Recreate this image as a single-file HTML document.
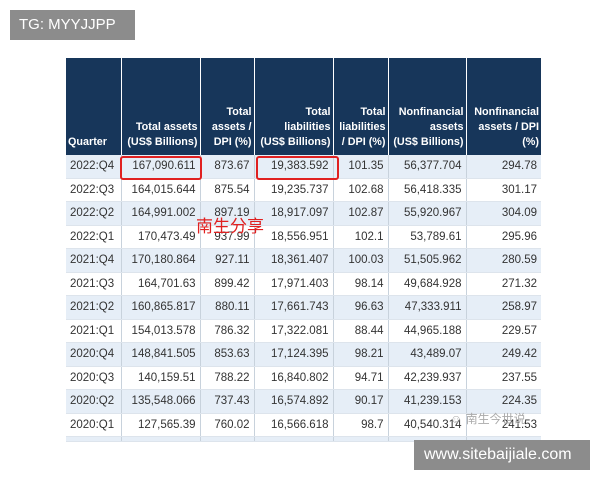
<!DOCTYPE html>
<html><head><meta charset="utf-8"><style>
body{margin:0;width:600px;height:480px;background:#fff;position:relative;overflow:hidden;font-family:"Liberation Sans",Arial,sans-serif;}
table{position:absolute;left:66px;top:58px;border-collapse:collapse;font-size:11.5px;color:#333;table-layout:fixed;width:475px}
th{background:#17365a;color:#fff;font-weight:bold;text-align:right;vertical-align:bottom;padding:0 2px 5px 2px;height:92px;border-left:1px solid #fff;line-height:15px;font-size:10.8px;white-space:nowrap}
th:first-child{text-align:left;border-left:none}
td{height:22.5px;padding:0 4px;text-align:right;border-left:1px solid #c8d2dc;border-bottom:1px solid #dde4ec;}
td:first-child{text-align:left;border-left:none}
tr:nth-child(odd) td{background:#e6eef7}
tr.p td{height:4px}
.badge{position:absolute;background:#8c8c8c;color:#fff;}
.red{position:absolute;border:2px solid #e02020;border-radius:3px}
</style></head><body>
<div class="badge" style="left:10px;top:10px;width:125px;height:30px;font-size:15px;line-height:30px;text-indent:9px">TG: MYYJJPP</div>
<table>
<colgroup><col style="width:55px"><col style="width:79px"><col style="width:54px"><col style="width:79px"><col style="width:55px"><col style="width:78px"><col style="width:75px"></colgroup>
<thead><tr><th>Quarter</th><th>Total assets<br>(US$ Billions)</th><th>Total<br>assets /<br>DPI (%)</th><th>Total<br>liabilities<br>(US$ Billions)</th><th>Total<br>liabilities<br>/ DPI (%)</th><th>Nonfinancial<br>assets<br>(US$ Billions)</th><th>Nonfinancial<br>assets / DPI<br>(%)</th></tr></thead>
<tbody>
<tr><td>2022:Q4</td><td>167,090.611</td><td>873.67</td><td>19,383.592</td><td>101.35</td><td>56,377.704</td><td>294.78</td></tr>
<tr><td>2022:Q3</td><td>164,015.644</td><td>875.54</td><td>19,235.737</td><td>102.68</td><td>56,418.335</td><td>301.17</td></tr>
<tr><td>2022:Q2</td><td>164,991.002</td><td>897.19</td><td>18,917.097</td><td>102.87</td><td>55,920.967</td><td>304.09</td></tr>
<tr><td>2022:Q1</td><td>170,473.49</td><td>937.99</td><td>18,556.951</td><td>102.1</td><td>53,789.61</td><td>295.96</td></tr>
<tr><td>2021:Q4</td><td>170,180.864</td><td>927.11</td><td>18,361.407</td><td>100.03</td><td>51,505.962</td><td>280.59</td></tr>
<tr><td>2021:Q3</td><td>164,701.63</td><td>899.42</td><td>17,971.403</td><td>98.14</td><td>49,684.928</td><td>271.32</td></tr>
<tr><td>2021:Q2</td><td>160,865.817</td><td>880.11</td><td>17,661.743</td><td>96.63</td><td>47,333.911</td><td>258.97</td></tr>
<tr><td>2021:Q1</td><td>154,013.578</td><td>786.32</td><td>17,322.081</td><td>88.44</td><td>44,965.188</td><td>229.57</td></tr>
<tr><td>2020:Q4</td><td>148,841.505</td><td>853.63</td><td>17,124.395</td><td>98.21</td><td>43,489.07</td><td>249.42</td></tr>
<tr><td>2020:Q3</td><td>140,159.51</td><td>788.22</td><td>16,840.802</td><td>94.71</td><td>42,239.937</td><td>237.55</td></tr>
<tr><td>2020:Q2</td><td>135,548.066</td><td>737.43</td><td>16,574.892</td><td>90.17</td><td>41,239.153</td><td>224.35</td></tr>
<tr><td>2020:Q1</td><td>127,565.39</td><td>760.02</td><td>16,566.618</td><td>98.7</td><td>40,540.314</td><td>241.53</td></tr>
<tr class="p"><td></td><td></td><td></td><td></td><td></td><td></td><td></td></tr>
</tbody></table>
<div class="red" style="left:120px;top:156px;width:78px;height:20px"></div>
<div class="red" style="left:256px;top:156px;width:79px;height:20px"></div>
<div style="position:absolute;left:196px;top:212px;color:#e02020;font-size:17px;font-family:'Liberation Sans','Noto Sans CJK SC',sans-serif">南生分享</div>
<div style="position:absolute;left:450px;top:410px;color:#aaa;font-size:12px;font-family:'Liberation Sans','Noto Sans CJK SC',sans-serif">☺ 南生今世说</div>
<div class="badge" style="left:414px;top:440px;width:176px;height:30px;font-size:16px;line-height:30px;text-indent:10px">www.sitebaijiale.com</div>
</body></html>
